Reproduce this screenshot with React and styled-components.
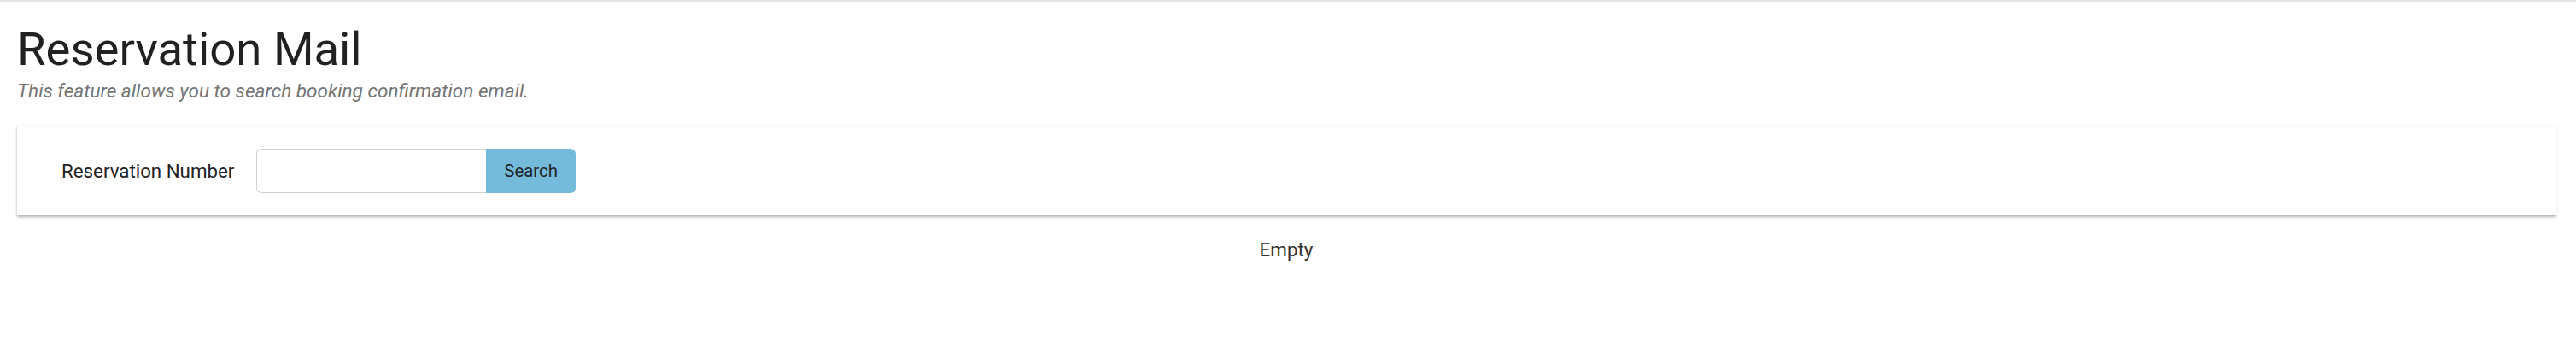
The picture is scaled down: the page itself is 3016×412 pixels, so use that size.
import React from 'react'
import styled, { createGlobalStyle } from 'styled-components'

const GlobalStyle = createGlobalStyle`
  body {
    margin: 0;
    background: #fff;
    font-family: Roboto, "Liberation Sans", Arial, sans-serif;
    color: #212121;
  }
`

function App() {
  return (
    <Page>
      <GlobalStyle />
      <Header>
        <Title>Reservation Mail</Title>
        <Subtitle>This feature allows you to search booking confirmation email.</Subtitle>
      </Header>
      <SearchCard>
        <Label htmlFor="reservation-number">Reservation Number</Label>
        <InputGroup>
          <Input id="reservation-number" type="text" />
          <SearchButton type="button">Search</SearchButton>
        </InputGroup>
      </SearchCard>
      <EmptyState>Empty</EmptyState>
    </Page>
  )
}

export default App

const Page = styled.div`
  border-top: 2px solid #e6e6e6;
  padding: 0 24px 40px 20px;
`

const Header = styled.div`
  padding-top: 24px;
  margin-bottom: 25px;
`

const Title = styled.h1`
  margin: 0;
  font-size: 54.5px;
  font-weight: 400;
  line-height: 1.17;
  color: #212121;
`

const Subtitle = styled.p`
  margin: 1px 0 0;
  font-size: 22.6px;
  font-style: italic;
  line-height: 1.4;
  color: #757575;
`

const SearchCard = styled.div`
  display: flex;
  align-items: center;
  height: 105px;
  box-sizing: border-box;
  padding: 0 52px;
  background: #fff;
  border-top: 1px solid #f3f3f3;
  box-shadow: 0 2px 3px rgba(0, 0, 0, 0.3), 0 0 2px rgba(0, 0, 0, 0.06);
`

const Label = styled.label`
  font-size: 22.3px;
  color: #222;
  margin-right: 26px;
`

const InputGroup = styled.div`
  display: flex;
  height: 52px;
`

const Input = styled.input`
  width: 269px;
  height: 100%;
  box-sizing: border-box;
  border: 1px solid #cfcfcf;
  border-right: none;
  border-radius: 6px 0 0 6px;
  padding: 0 14px;
  font-size: 20px;
  font-family: inherit;
  outline: none;
`

const SearchButton = styled.button`
  height: 100%;
  padding: 0 21px;
  border: none;
  border-radius: 0 6px 6px 0;
  background: #74bbdb;
  color: #212529;
  font-size: 20.4px;
  font-family: inherit;
  cursor: pointer;
`

const EmptyState = styled.div`
  margin-top: 24px;
  text-align: center;
  font-size: 22.4px;
  line-height: 1.5;
  color: #333;
`
